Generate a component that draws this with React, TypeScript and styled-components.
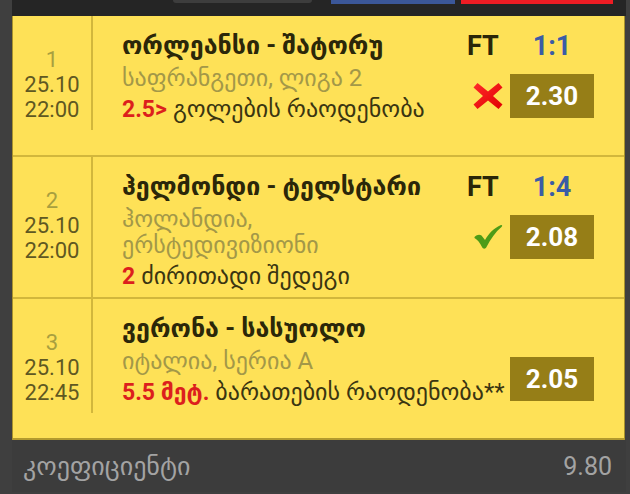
import React from "react";
import styled, { createGlobalStyle } from "styled-components";

const GlobalStyle = createGlobalStyle`
  html, body { margin: 0; padding: 0; background: #3f3f3f; }
  body { font-family: Roboto, "DejaVu Sans", sans-serif; }
  * { box-sizing: border-box; }
`;

const Page = styled.div`
  width: 630px;
  height: 494px;
  overflow: hidden;
  background: #3f3f3f;
`;

const Wrap = styled.div`
  margin-left: 12px;
  width: 614px;
  display: flex;
  flex-direction: column;
`;

const TopBar = styled.div`
  height: 16px;
  background: #252525;
  display: flex;
  align-items: flex-start;
  padding-left: 161px;
`;

const TopTab = styled.div<{ $w: number; $bg: string; $h: number; $ml: number; $round?: boolean }>`
  width: ${(p) => p.$w}px;
  height: ${(p) => p.$h}px;
  background: ${(p) => p.$bg};
  margin-left: ${(p) => p.$ml}px;
  border-radius: ${(p) => (p.$round ? "0 0 4px 4px" : "0")};
`;

const Panel = styled.div`
  width: 613px;
  background: #fee157;
  border-left: 1px solid #a8922c;
  border-right: 1px solid #a8922c;
  display: flex;
  flex-direction: column;
`;

const Row = styled.div`
  min-height: 141px;
  border-bottom: 2px solid #d2b73c;
  &:last-child { border-bottom-color: #b39a2e; }
`;

const RowInner = styled.div`
  display: flex;
  align-items: stretch;
`;

const LeftCol = styled.div`
  width: 80px;
  flex: none;
  border-right: 2px solid #d2b73c;
  padding-top: 31px;
  text-align: center;
  font-family: Roboto, sans-serif;
  font-size: 22px;
  line-height: 25px;
`;

const Num = styled.div`
  color: #a89f3f;
`;

const DateLine = styled.div`
  color: #5f5822;
`;

const Main = styled.div`
  flex: 1;
  min-width: 0;
  padding: 14px 0 4px 29px;
  white-space: nowrap;
`;

const Title = styled.div`
  font-size: 25px;
  font-weight: bold;
  line-height: 32px;
  color: #2b2709;
`;

const Sub = styled.div<{ $first: boolean }>`
  margin-top: ${(p) => (p.$first ? 3 : 0)}px;
  font-size: 24px;
  line-height: 26px;
  color: #a39848;
`;

const Market = styled.div`
  margin-top: 2px;
  font-size: 24px;
  line-height: 32px;
  color: #3a3511;
`;

const Pick = styled.span`
  color: #dc1f1d;
  font-weight: bold;
  font-family: Roboto, "DejaVu Sans", sans-serif;
  font-size: 23px;
`;

const Right = styled.div`
  width: 127px;
  flex: none;
  margin-right: 30px;
  padding-top: 14px;
  display: grid;
  grid-template-columns: 36px 84px;
  column-gap: 7px;
  grid-template-rows: 32px 44px;
  row-gap: 12px;
  align-content: start;
`;

const Status = styled.div`
  font-family: Roboto, sans-serif;
  font-weight: bold;
  font-size: 27px;
  line-height: 32px;
  color: #2a2608;
`;

const Score = styled(Status)`
  color: #3a5ca6;
  text-align: center;
`;

const IconCell = styled.div`
  display: flex;
  align-items: center;
  justify-content: flex-end;
`;

const Odds = styled.div`
  position: relative;
  background: #967e17;
  color: #ffffff;
  font-family: Roboto, sans-serif;
  font-weight: bold;
  font-size: 26px;
  display: flex;
  align-items: center;
  justify-content: center;
`;

const Footer = styled.div`
  height: 52px;
  background: #3c3c3c;
  display: flex;
  align-items: center;
  justify-content: space-between;
  padding: 0 14px 0 11px;
  color: #a3a3a3;
  font-size: 26px;
`;

const FooterValue = styled.span`
  font-family: Roboto, sans-serif;
  font-size: 25px;
`;

const CrossIcon = () => (
  <svg width="30" height="28" viewBox="0 0 30 28">
    <defs>
      <linearGradient id="xg" x1="0" y1="0" x2="1" y2="1">
        <stop offset="0" stopColor="#ff2a2a" />
        <stop offset="1" stopColor="#e00000" />
      </linearGradient>
    </defs>
    <path
      d="M4.5 1 L15 9.5 L25.5 1 L29.5 5.5 L20 14 L29.5 22.5 L25.5 27 L15 18.5 L4.5 27 L0.5 22.5 L10 14 L0.5 5.5 Z"
      fill="url(#xg)"
    />
  </svg>
);

const CheckIcon = () => (
  <svg width="30" height="26" viewBox="0 0 30 26">
    <path
      d="M1.5 13 C4 10.5 6.5 10 8.5 11.5 L12 16 C16 9 21 4 28 1 C29.5 0.8 29.5 2 28.5 3 C22.5 8 17.5 15 13.5 23 C12.5 25.2 10 25.2 9 23 C7 19 5 16 1.5 14 Z"
      fill="#4d9b17"
    />
  </svg>
);

type Match = {
  n: number;
  date: string;
  time: string;
  title: string;
  sub: string[];
  pick: string;
  market: string;
  status?: string;
  score?: string;
  result?: "win" | "lose";
  odds: string;
};

const matches: Match[] = [
  {
    n: 1,
    date: "25.10",
    time: "22:00",
    title: "ორლეანსი - შატორუ",
    sub: ["საფრანგეთი, ლიგა 2"],
    pick: "2.5>",
    market: "გოლების რაოდენობა",
    status: "FT",
    score: "1:1",
    result: "lose",
    odds: "2.30",
  },
  {
    n: 2,
    date: "25.10",
    time: "22:00",
    title: "ჰელმონდი - ტელსტარი",
    sub: ["ჰოლანდია,", "ერსტედივიზიონი"],
    pick: "2",
    market: "ძირითადი შედეგი",
    status: "FT",
    score: "1:4",
    result: "win",
    odds: "2.08",
  },
  {
    n: 3,
    date: "25.10",
    time: "22:45",
    title: "ვერონა - სასუოლო",
    sub: ["იტალია, სერია A"],
    pick: "5.5 მეტ.",
    market: "ბარათების რაოდენობა**",
    odds: "2.05",
  },
];

export default function App() {
  return (
    <Page>
      <GlobalStyle />
      <Wrap>
        <TopBar>
          <TopTab $w={139} $h={3} $bg="#3d3d3d" $ml={0} $round />
          <TopTab $w={124} $h={4} $bg="#3b5799" $ml={19} />
          <TopTab $w={152} $h={4} $bg="#ee1c24" $ml={6} />
        </TopBar>
        <Panel>
          {matches.map((m) => (
            <Row key={m.n}>
              <RowInner>
                <LeftCol>
                  <Num>{m.n}</Num>
                  <DateLine>{m.date}</DateLine>
                  <DateLine>{m.time}</DateLine>
                </LeftCol>
                <Main>
                  <Title>{m.title}</Title>
                  {m.sub.map((s, i) => (
                    <Sub key={i} $first={i === 0}>
                      {s}
                    </Sub>
                  ))}
                  <Market>
                    <Pick>{m.pick}</Pick> {m.market}
                  </Market>
                </Main>
                <Right>
                  <Status>{m.status ?? ""}</Status>
                  <Score>{m.score ?? ""}</Score>
                  <IconCell>
                    {m.result === "lose" && <CrossIcon />}
                    {m.result === "win" && <CheckIcon />}
                  </IconCell>
                  <Odds>{m.odds}</Odds>
                </Right>
              </RowInner>
            </Row>
          ))}
        </Panel>
        <Footer>
          <span>კოეფიციენტი</span>
          <FooterValue>9.80</FooterValue>
        </Footer>
      </Wrap>
    </Page>
  );
}
